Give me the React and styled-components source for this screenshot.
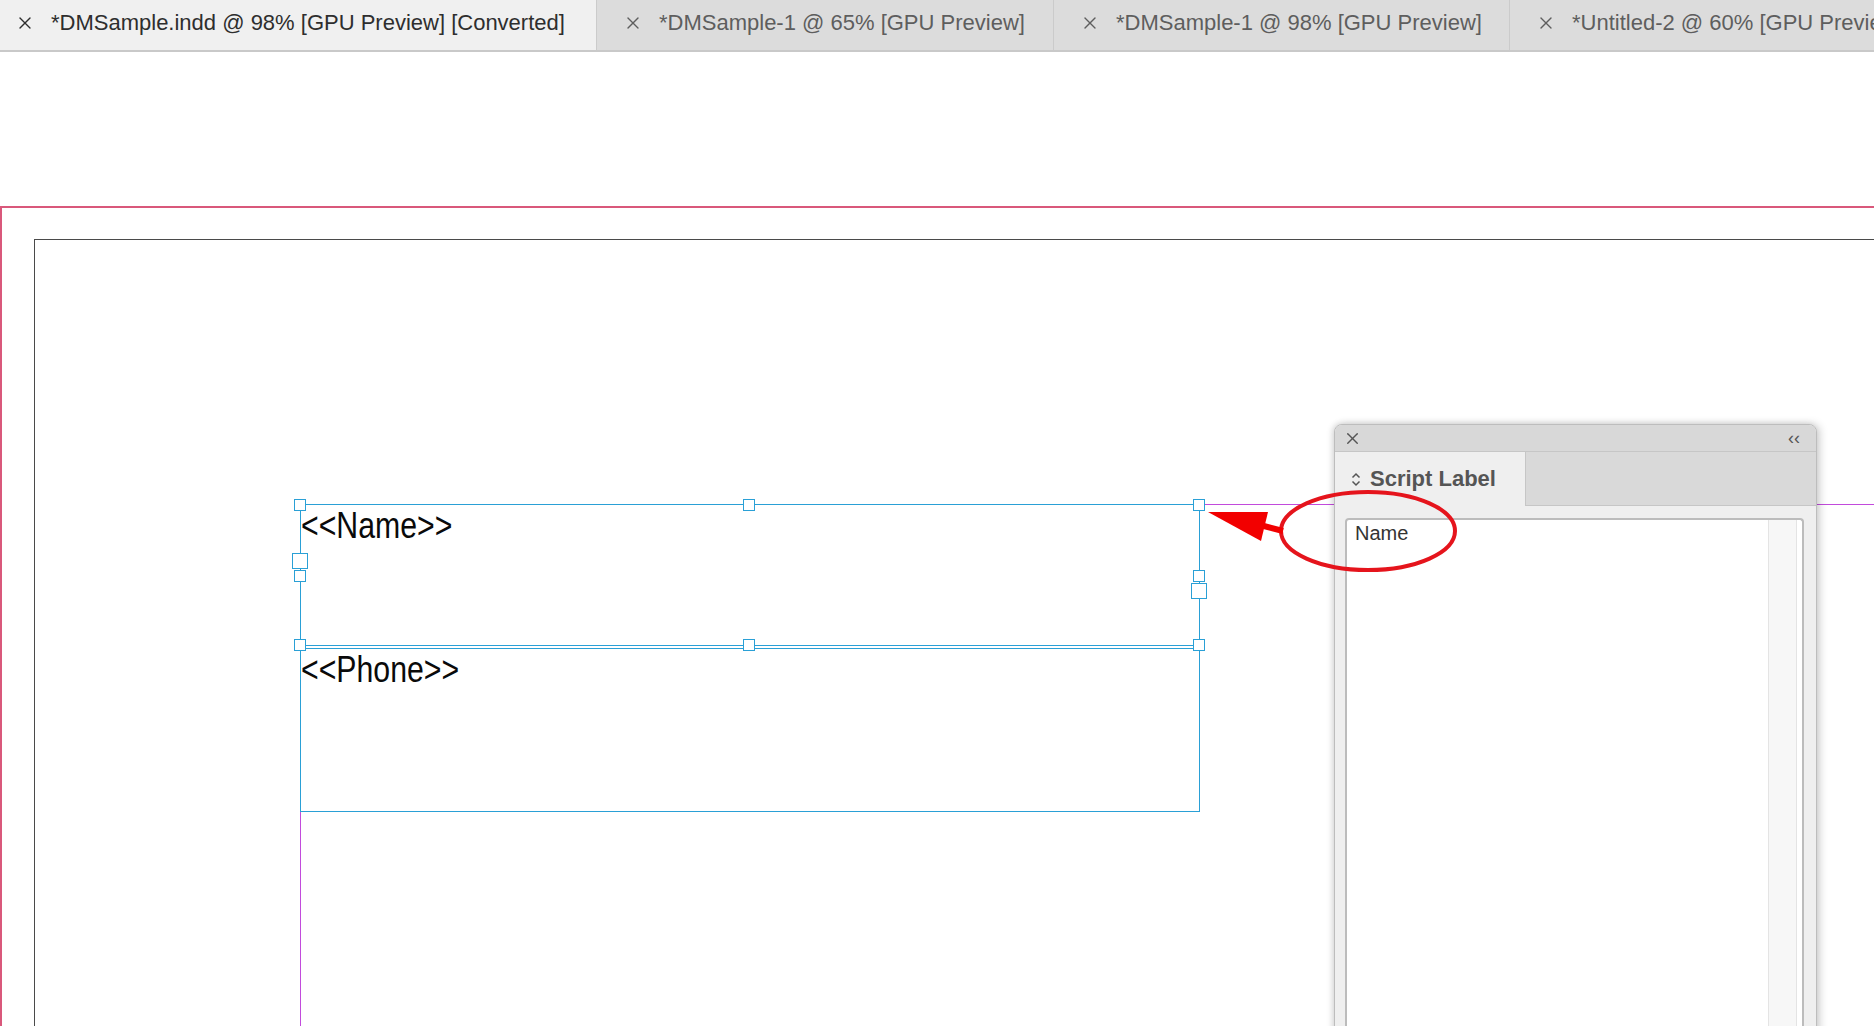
import React from "react";
import styled, { createGlobalStyle } from "styled-components";
import { X } from "lucide-react";

const GlobalStyle = createGlobalStyle`
  html, body {
    margin: 0;
    padding: 0;
    background: #ffffff;
    overflow: hidden;
    font-family: "Liberation Sans", Arial, sans-serif;
  }
`;

const Root = styled.div`
  position: relative;
  width: 1874px;
  height: 1026px;
  display: flex;
  flex-direction: column;
  overflow: hidden;
`;

const TabBar = styled.div`
  display: flex;
  height: 50px;
  flex-shrink: 0;
  background: #dcdcdc;
  border-bottom: 2px solid #c9c9c9;
`;

const Tab = styled.div`
  display: flex;
  align-items: center;
  gap: 16px;
  width: ${(p) => p.$width}px;
  flex-shrink: 0;
  padding: 0 0 4px ${(p) => (p.$active ? 15 : 26)}px;
  box-sizing: border-box;
  background: ${(p) => (p.$active ? "#f0f0f0" : "#dcdcdc")};
  border-right: 1px solid #cbcbcb;
  color: ${(p) => (p.$active ? "#2e2e2e" : "#5e5e5e")};
  font-size: 22px;
  white-space: nowrap;
  overflow: hidden;
  svg {
    flex-shrink: 0;
  }
`;

const Canvas = styled.div`
  position: relative;
  flex: 1;
  background: #ffffff;
  overflow: hidden;
`;

const BleedEdge = styled.div`
  position: absolute;
  left: 0;
  top: 154px;
  right: -10px;
  bottom: -10px;
  border: 2px solid #d9587b;
`;

const PageEdge = styled.div`
  position: absolute;
  left: 34px;
  top: 187px;
  right: -10px;
  bottom: -10px;
  border: 1.5px solid #4a4a4a;
`;

const MarginGuide = styled.div`
  position: absolute;
  left: 300px;
  top: 452px;
  right: -10px;
  bottom: -10px;
  border: 1px solid #c24bdc;
`;

const TextFrame = styled.div`
  position: absolute;
  left: 300px;
  top: ${(p) => p.$top}px;
  width: 900px;
  height: ${(p) => p.$height}px;
  box-sizing: border-box;
  border: 1.5px solid #2aa0d6;
  padding-top: 3px;
  font-size: 36px;
  line-height: 1;
  color: #0a0a0a;
`;

// Myriad-like narrow setting of the placeholder text
const Placeholder = styled.span`
  display: inline-block;
  transform: scaleX(0.84);
  transform-origin: left center;
  white-space: nowrap;
`;

const Handle = styled.div`
  position: absolute;
  left: ${(p) => p.$x - p.$size / 2}px;
  top: ${(p) => p.$y - p.$size / 2}px;
  width: ${(p) => p.$size}px;
  height: ${(p) => p.$size}px;
  box-sizing: border-box;
  background: #ffffff;
  border: 1.5px solid #2aa0d6;
`;

const Panel = styled.div`
  position: absolute;
  left: 1334px;
  top: 372px;
  width: 481px;
  bottom: -10px;
  display: flex;
  flex-direction: column;
  background: #efefef;
  border: 1px solid #bdbdbd;
  border-radius: 8px 8px 0 0;
  box-shadow: 3px 0 8px rgba(0, 0, 0, 0.18), -2px 0 6px rgba(0, 0, 0, 0.12);
  overflow: hidden;
`;

const PanelTitle = styled.div`
  display: flex;
  align-items: center;
  justify-content: space-between;
  height: 26px;
  padding: 0 16px 0 8px;
  background: #d8d8d8;
  border-bottom: 1px solid #c6c6c6;
  color: #555;
  font-size: 18px;
`;

const PanelTabs = styled.div`
  display: flex;
  height: 53px;
  background: #d9d9d9;
  border-bottom: 1px solid #c6c6c6;
`;

const PanelTab = styled.div`
  display: flex;
  align-items: center;
  gap: 9px;
  width: 191px;
  padding-left: 16px;
  box-sizing: border-box;
  background: #efefef;
  border-right: 1px solid #c6c6c6;
  margin-bottom: -1px;
  color: #555;
  font-size: 22px;
  font-weight: bold;
`;

const PanelBody = styled.div`
  flex: 1;
  display: flex;
  padding: 12px 12px 0 10px;
`;

const LabelBox = styled.div`
  flex: 1;
  display: flex;
  background: #ffffff;
  border: 2px solid #bcbcbc;
  border-bottom: none;
  border-radius: 4px 4px 0 0;
`;

const LabelText = styled.div`
  flex: 1;
  padding: 2px 0 0 8px;
  font-size: 20px;
  color: #333;
`;

const ScrollTrack = styled.div`
  width: 27px;
  margin-right: 5px;
  background: #f7f7f7;
  border-left: 1px solid #e4e4e4;
  border-right: 1px solid #e4e4e4;
`;

const Annotation = styled.svg`
  position: absolute;
  left: 0;
  top: 0;
  pointer-events: none;
`;

const tabs = [
  { title: "*DMSample.indd @ 98% [GPU Preview] [Converted]", width: 597, active: true },
  { title: "*DMSample-1 @ 65% [GPU Preview]", width: 457 },
  { title: "*DMSample-1 @ 98% [GPU Preview]", width: 456 },
  { title: "*Untitled-2 @ 60% [GPU Preview]", width: 420 },
];

// handle centres in canvas coords (page y - 52)
const handles = [
  { x: 300, y: 453, size: 12 },
  { x: 749, y: 453, size: 12 },
  { x: 1199, y: 453, size: 12 },
  { x: 300, y: 593, size: 12 },
  { x: 749, y: 593, size: 12 },
  { x: 1199, y: 593, size: 12 },
  { x: 300, y: 509, size: 16 },
  { x: 300, y: 524, size: 12 },
  { x: 1199, y: 524, size: 12 },
  { x: 1199, y: 539, size: 16 },
];

const UpDown = () => (
  <svg width="10" height="15" viewBox="0 0 10 15" fill="none" stroke="#555" strokeWidth="1.5">
    <path d="M1.5 5.5 L5 2 L8.5 5.5" />
    <path d="M1.5 9.5 L5 13 L8.5 9.5" />
  </svg>
);

export default function App() {
  return (
    <Root>
      <GlobalStyle />
      <TabBar>
        {tabs.map((t) => (
          <Tab key={t.title} $width={t.width} $active={t.active}>
            <X size={20} strokeWidth={1.6} />
            {t.title}
          </Tab>
        ))}
      </TabBar>
      <Canvas>
        <BleedEdge />
        <PageEdge />
        <MarginGuide />
        <TextFrame $top={452} $height={142}>
          <Placeholder>&lt;&lt;Name&gt;&gt;</Placeholder>
        </TextFrame>
        <TextFrame $top={596} $height={164}>
          <Placeholder>&lt;&lt;Phone&gt;&gt;</Placeholder>
        </TextFrame>
        {handles.map((h, i) => (
          <Handle key={i} $x={h.x} $y={h.y} $size={h.size} />
        ))}
        <Panel>
          <PanelTitle>
            <X size={19} strokeWidth={1.8} />
            <span>‹‹</span>
          </PanelTitle>
          <PanelTabs>
            <PanelTab>
              <UpDown />
              Script Label
            </PanelTab>
          </PanelTabs>
          <PanelBody>
            <LabelBox>
              <LabelText>Name</LabelText>
              <ScrollTrack />
            </LabelBox>
          </PanelBody>
        </Panel>
      </Canvas>
      <Annotation width="1874" height="1026">
        <ellipse cx="1368" cy="531" rx="87" ry="39" fill="none" stroke="#e5141c" strokeWidth="4" />
        <polygon points="1208,512 1268,512 1261,541" fill="#f20000" />
        <line x1="1260" y1="525" x2="1283" y2="531" stroke="#f20000" strokeWidth="6" />
      </Annotation>
    </Root>
  );
}
